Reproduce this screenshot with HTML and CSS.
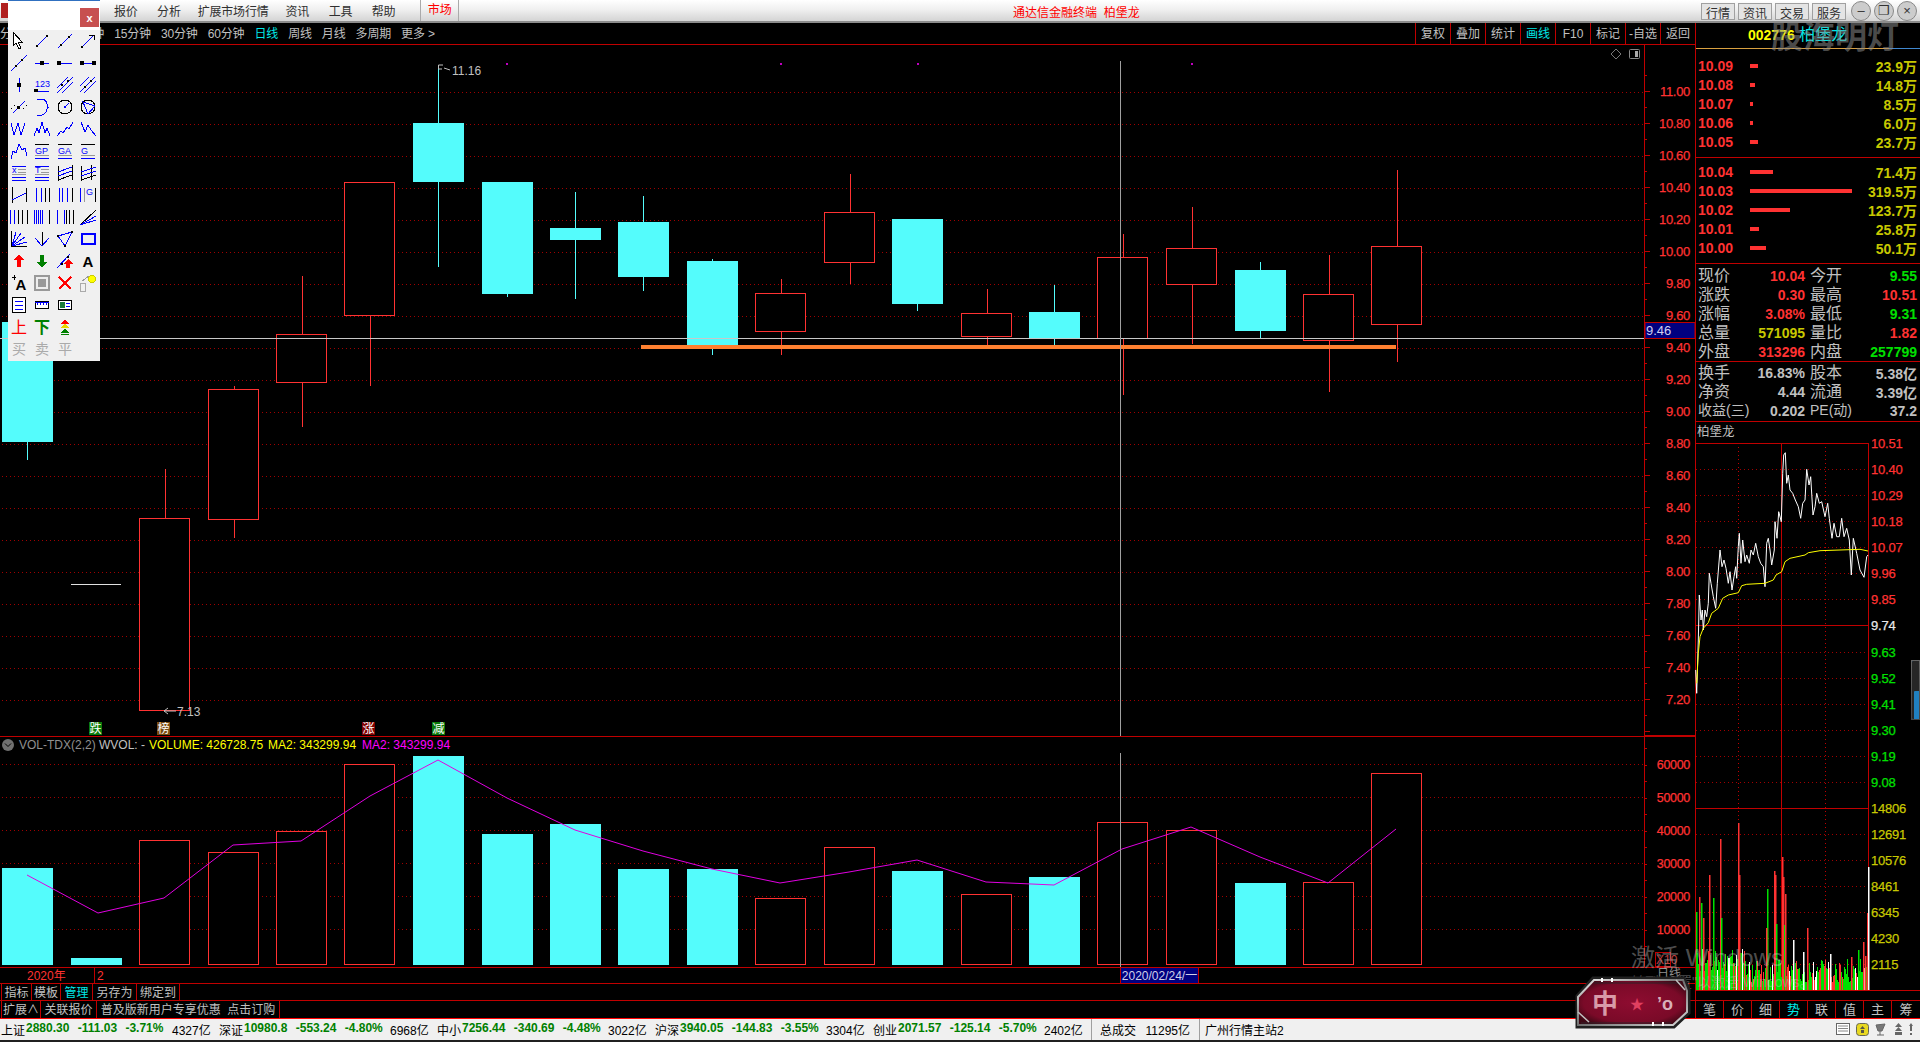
FILE: index.html
```html
<!DOCTYPE html>
<html lang="zh-CN">

<head>
    <meta charset="UTF-8">
    <title>通达信金融终端 柏堡龙</title>
    <link rel="stylesheet" href="styles.css">
</head>

<body>
    <header class="menubar">
        <div class="logo"></div>
        <nav class="menu">
            <span>报价</span><span>分析</span><span class="wide">扩展市场行情</span><span>资讯</span><span>工具</span><span>帮助</span>
        </nav>
        <div class="menu-market">市场</div>
        <div class="menu-title">通达信金融终端&nbsp;&nbsp;柏堡龙</div>
        <div class="menu-btns">
            <button>行情</button><button>资讯</button><button>交易</button><button>服务</button>
        </div>
        <div class="win-btns">
            <i>–</i><i>❐</i><i>×</i>
        </div>
    </header>

    <div class="main">
        <div class="left">
            <div class="periods">
                <div class="period-list">
                    <span>分时</span><span>1分钟</span><span>5分钟</span><span>15分钟</span><span>30分钟</span><span>60分钟</span>
                    <span class="on">日线</span><span>周线</span><span>月线</span><span>多周期</span><span>更多 &gt;</span>
                </div>
                <div class="period-tools">
                    <span>复权</span><span>叠加</span><span>统计</span><span class="on">画线</span><span>F10</span><span>标记</span><span>-自选</span><span>返回</span>
                </div>
            </div>

            <svg id="pricePane" class="pane-price" viewBox="0 45 1695 692"></svg>
            <svg id="volPane" class="pane-vol" viewBox="0 737 1695 230"></svg>

            <div class="tabrow date-row">
                <span class="year">2020年</span><span class="month">2</span>
                <span class="date-tip">2020/02/24/一</span>
                <span class="date-kind">日线</span>
            </div>
            <div class="tabrow tab-row">
                <span>指标</span><span>模板</span><span class="on">管理</span><span>另存为</span><span>绑定到</span>
            </div>
            <div class="tabrow ext-row">
                <span>扩展∧</span><span>关联报价</span><span>普及版新用户专享优惠&nbsp;&nbsp;点击订购</span>
            </div>
        </div>

        <aside class="side">
            <div class="side-head"><b>002776</b> <span>柏堡龙</span></div>

            <div id="askBook" class="book book-ask"></div>
            <div id="bidBook" class="book book-bid"></div>

            <div class="info info-quote">
                <div class="info-row"><div class="kv"><span>现价</span><b class="red">10.04</b></div><div class="kv"><span>今开</span><b class="green">9.55</b></div></div>
                <div class="info-row"><div class="kv"><span>涨跌</span><b class="red">0.30</b></div><div class="kv"><span>最高</span><b class="red">10.51</b></div></div>
                <div class="info-row"><div class="kv"><span>涨幅</span><b class="red">3.08%</b></div><div class="kv"><span>最低</span><b class="green">9.31</b></div></div>
                <div class="info-row"><div class="kv"><span>总量</span><b class="olive">571095</b></div><div class="kv"><span>量比</span><b class="red">1.82</b></div></div>
                <div class="info-row"><div class="kv"><span>外盘</span><b class="red">313296</b></div><div class="kv"><span>内盘</span><b class="green">257799</b></div></div>
            </div>
            <div class="info info-base">
                <div class="info-row"><div class="kv"><span>换手</span><b>16.83%</b></div><div class="kv"><span>股本</span><b>5.38亿</b></div></div>
                <div class="info-row"><div class="kv"><span>净资</span><b>4.44</b></div><div class="kv"><span>流通</span><b>3.39亿</b></div></div>
                <div class="info-row"><div class="kv"><span class="tight">收益(三)</span><b>0.202</b></div><div class="kv"><span class="tight">PE(动)</span><b>37.2</b></div></div>
            </div>

            <div class="mini-name">柏堡龙</div>
            <svg id="miniPane" class="pane-mini" viewBox="1696 443 224 547"></svg>
            <div class="mini-gap"></div>
            <div class="mini-tabs">
                <span>笔</span><span>价</span><span>细</span><span class="on">势</span><span>联</span><span>值</span><span>主</span><span>筹</span>
            </div>
        </aside>
    </div>

    <footer class="status">
        <div class="idx"><span class="idx-name">上证</span><b>2880.30 -111.03 -3.71%</b><span>4327亿</span></div>
        <div class="idx"><span class="idx-name">深证</span><b>10980.8 -553.24 -4.80%</b><span>6968亿</span></div>
        <div class="idx"><span class="idx-name">中小</span><b>7256.44 -340.69 -4.48%</b><span>3022亿</span></div>
        <div class="idx"><span class="idx-name">沪深</span><b>3940.05 -144.83 -3.55%</b><span>3304亿</span></div>
        <div class="idx"><span class="idx-name">创业</span><b>2071.57 -125.14 -5.70%</b><span>2402亿</span></div>
        <div class="stat-total"><span>总成交</span><span>11295亿</span></div>
        <div class="stat-server">广州行情主站2</div>
        <div class="tray">
            <svg width="14" height="14" viewBox="0 0 14 14"><rect x="0.5" y="1.5" width="13" height="11" fill="#fff" stroke="#666"/><path d="M2 4H12M2 6.500H12M2 9H12" stroke="#888"/></svg>
            <svg width="13" height="13" viewBox="0 0 13 13"><rect x="0.5" y="0.5" width="12" height="12" rx="3" fill="#e8d820" stroke="#665"/><path d="M6.500 3L9 6H4ZM5 7H8V10H5Z" fill="#554"/></svg>
            <svg width="13" height="13" viewBox="0 0 13 13"><path d="M1 2L10 1L7 8H3ZM5 8V12M2 12H9" fill="#777" stroke="#666"/></svg>
            <svg width="9" height="13" viewBox="0 0 9 13"><path d="M4.500 0L8 4H1ZM4.500 4L8 8H1ZM1 9H8V12H1Z" fill="#666"/></svg>
            <svg width="4" height="12" viewBox="0 0 4 12"><path d="M2 0L4 3H3V8H1V3H0ZM1 10H3V12H1Z" fill="#666"/></svg>
        </div>
    </footer>

    <!-- drawing toolbar floats over the chart -->
    <div class="toolbar">
        <div class="toolbar-title"><button>x</button></div>
        <div class="tool-grid">
            <svg viewBox="0 0 22 22"><path class="w" d="M5 2V16L8 13L11 19L13 18L10 12H14Z"/></svg>
            <svg viewBox="0 0 22 22"><path class="b" d="M6 16L16 6"/><rect class="d" x="5" y="15" width="2" height="2"/><rect class="d" x="15" y="5" width="2" height="2"/></svg>
            <svg viewBox="0 0 22 22"><path class="b" d="M4 18L18 4"/><rect class="d" x="6" y="14" width="2" height="2"/><rect class="d" x="14" y="6" width="2" height="2"/></svg>
            <svg viewBox="0 0 22 22"><path class="b" d="M5 17L17 5"/><path class="k" d="M12 5H17V10"/><rect class="d" x="4" y="16" width="2" height="2"/></svg>

            <svg viewBox="0 0 22 22"><path class="b" d="M3 19L19 3"/><rect class="d" x="7" y="13" width="2" height="2"/><rect class="d" x="13" y="7" width="2" height="2"/></svg>
            <svg viewBox="0 0 22 22"><path class="b" d="M4 11H18"/><rect class="d" x="9" y="9" width="4" height="4"/></svg>
            <svg viewBox="0 0 22 22"><path class="b" d="M4 11H18"/><rect class="d" x="3" y="9" width="4" height="4"/></svg>
            <svg viewBox="0 0 22 22"><path class="b" d="M4 11H18"/><rect class="d" x="3" y="9" width="4" height="4"/><rect class="d" x="15" y="9" width="4" height="4"/></svg>

            <svg viewBox="0 0 22 22"><path class="b" d="M11 4V18"/><rect class="d" x="9" y="9" width="4" height="4"/></svg>
            <svg viewBox="0 0 22 22"><text class="tb" x="4" y="13">123</text><path class="b" d="M4 17H18"/><rect class="d" x="3" y="15" width="4" height="3"/></svg>
            <svg viewBox="0 0 22 22"><path class="b" d="M3 14L14 3M3 19L19 3M8 19L19 8"/><rect class="d" x="7" y="10" width="2" height="2"/><rect class="d" x="13" y="6" width="2" height="2"/></svg>
            <svg viewBox="0 0 22 22"><path class="b" d="M3 12L12 3M3 18L18 3M7 19L19 7"/><rect class="d" x="7" y="12" width="2" height="2"/><rect class="d" x="13" y="6" width="2" height="2"/></svg>

            <svg viewBox="0 0 22 22"><path class="b" d="M5 17L17 5"/><path class="k" d="M3 13L7 9M15 13L19 9" stroke-dasharray="2 2"/><rect class="d" x="9" y="10" width="3" height="3"/></svg>
            <svg viewBox="0 0 22 22"><path class="b" d="M6 3H11C18 4 18 17 11 19H6M16 11H18"/></svg>
            <svg viewBox="0 0 22 22"><circle class="k" cx="11" cy="11" r="7"/><path class="b" d="M11 11L15 7"/><rect class="d2" x="10" y="10" width="2" height="2"/></svg>
            <svg viewBox="0 0 22 22"><circle class="k" cx="11" cy="11" r="7"/><path class="b" d="M6 6L18 10L11 18Z"/></svg>

            <svg viewBox="0 0 22 22"><path class="b" d="M3 5L6 17L10 5L13 17L17 5"/></svg>
            <svg viewBox="0 0 22 22"><path class="b" d="M3 18L6 10L8 15L11 4L14 15L16 10L19 18"/></svg>
            <svg viewBox="0 0 22 22"><path class="b" d="M3 18L7 13L9 15L13 9L15 11L19 4"/></svg>
            <svg viewBox="0 0 22 22"><path class="b" d="M4 4L8 14L11 7L14 12L19 18"/></svg>

            <svg viewBox="0 0 22 22"><path class="b" d="M3 19L5 11L8 13L11 4L14 10L17 8L19 16"/></svg>
            <svg viewBox="0 0 22 22"><path class="k" d="M4 4H18"/><text class="tb" x="4" y="14">GP</text><path class="g" d="M4 15H18"/><path class="b" d="M4 18H18"/></svg>
            <svg viewBox="0 0 22 22"><path class="k" d="M4 4H18"/><text class="tb" x="4" y="14">GA</text><path class="g" d="M4 15H18"/><path class="b" d="M4 18H18"/></svg>
            <svg viewBox="0 0 22 22"><path class="k" d="M4 4H18"/><text class="tb" x="4" y="14">G</text><path class="g" d="M4 15H18"/><path class="b" d="M4 18H18"/></svg>

            <svg viewBox="0 0 22 22"><path class="b" d="M4 4H18M4 18H18M4 15H18"/><path class="g" d="M10 7H18M10 10H18M4 12H18"/><text class="tb" x="4" y="11">x</text></svg>
            <svg viewBox="0 0 22 22"><path class="b" d="M4 4H18M4 18H18M4 15H18"/><path class="g" d="M10 7H18M10 10H18M4 12H18"/><text class="tb" x="4" y="11">T</text></svg>
            <svg viewBox="0 0 22 22"><path class="k" d="M4 4V19M18 3V18"/><path class="b" d="M4 10L18 5M4 14L18 9"/><path class="k" d="M4 18L18 13"/></svg>
            <svg viewBox="0 0 22 22"><path class="k" d="M4 4V19M14 3V18"/><path class="b" d="M4 10L19 5M4 14L19 9"/><path class="k" d="M4 18L19 13"/></svg>

            <svg viewBox="0 0 22 22"><path class="k" d="M4 3V19"/><path class="b" d="M4 16L18 9"/><path class="k" d="M18 4V18"/></svg>
            <svg viewBox="0 0 22 22"><path class="b" d="M5 4V18M10 4V18"/><path class="k" d="M14 4V18M18 4V18"/></svg>
            <svg viewBox="0 0 22 22"><path class="b" d="M5 4V18M8 4V18M13 4V18"/><path class="k" d="M18 4V18"/></svg>
            <svg viewBox="0 0 22 22"><path class="b" d="M3 4V18"/><path class="g" d="M7 4V18"/><path class="k" d="M18 4V18"/><text class="tb" x="9" y="11">G</text></svg>

            <svg viewBox="0 0 22 22"><path class="b" d="M2 4V18M6 4V18"/><path class="k" d="M10 4V18M14 4V18M19 4V18"/></svg>
            <svg viewBox="0 0 22 22"><path class="b" d="M3 4V18M5 4V18M7 4V18M9 4V18M11 4V18"/><path class="k" d="M18 4V18"/></svg>
            <svg viewBox="0 0 22 22"><path class="b" d="M3 4V18M10 4V18"/><path class="k" d="M12 4V18M15 4V18M19 4V18"/></svg>
            <svg viewBox="0 0 22 22"><path class="k" d="M3 19L19 4"/><path class="b" d="M3 19L19 10M3 19L19 14"/></svg>

            <svg viewBox="0 0 22 22"><path class="k" d="M3 3V18H19"/><path class="b" d="M4 18L8 4M4 18L13 5M4 18L17 9M4 18L19 14"/></svg>
            <svg viewBox="0 0 22 22"><path class="k" d="M11 4V18"/><path class="b" d="M4 10L11 18L18 10"/></svg>
            <svg viewBox="0 0 22 22"><path class="b" d="M4 8L18 4L11 18Z"/><rect class="d" x="3" y="7" width="2" height="2"/><rect class="d" x="17" y="3" width="2" height="2"/><rect class="d" x="10" y="17" width="2" height="2"/></svg>
            <svg viewBox="0 0 22 22"><rect class="b2" x="4.500" y="5.500" width="13" height="10"/></svg>

            <svg viewBox="0 0 22 22"><path fill="#f00" d="M11 4L16 10H13V17H9V10H6Z"/></svg>
            <svg viewBox="0 0 22 22"><path fill="#008000" d="M9 5H13V12H16L11 18L6 12H9Z"/></svg>
            <svg viewBox="0 0 22 22"><path class="b" d="M3 18L16 4"/><rect class="d" x="7" y="13" width="2" height="2"/><rect class="d" x="13" y="6" width="2" height="2"/><path fill="#f00" d="M14 9L19 14H16V18H12V14H9Z"/></svg>
            <svg viewBox="0 0 22 22"><text class="tk" x="11" y="17">A</text></svg>

            <svg viewBox="0 0 22 22"><text class="tk" x="13" y="18">A</text><path class="k" d="M6 3V8M4 5H8"/></svg>
            <svg viewBox="0 0 22 22"><rect x="4" y="4" width="14" height="14" fill="#eee" stroke="#999" stroke-width="2"/><rect x="7" y="7" width="8" height="8" fill="#999"/></svg>
            <svg viewBox="0 0 22 22"><path stroke="#f00" stroke-width="2" d="M5 5L17 17M17 5L5 17"/></svg>
            <svg viewBox="0 0 22 22"><rect x="3.500" y="11.500" width="5" height="8" fill="none" stroke="#aaa"/><path class="g" d="M5 9L12 4"/><circle cx="15" cy="7" r="3.500" fill="#ff0" stroke="#cc0"/></svg>

            <svg viewBox="0 0 22 22"><rect x="4.500" y="3.500" width="13" height="15" fill="#fff" stroke="#000"/><path class="b" d="M7 7H15M7 11H15M7 15H15"/></svg>
            <svg viewBox="0 0 22 22"><rect x="4.500" y="7.500" width="13" height="7" fill="#fff" stroke="#000"/><path class="b" d="M4 8H18M6 8V11M9 8V11M12 8V11M15 8V11"/></svg>
            <svg viewBox="0 0 22 22"><rect x="4.500" y="6.500" width="13" height="9" fill="#fff" stroke="#000"/><rect x="6" y="8" width="5" height="6" fill="#1a7a3a"/><path class="b" d="M12 9H16M12 12H16"/></svg>
            <svg viewBox="0 0 22 22"></svg>

            <svg viewBox="0 0 22 22"><text class="tc red-t" x="11" y="17">上</text></svg>
            <svg viewBox="0 0 22 22"><text class="tc green-t" x="11" y="17">下</text></svg>
            <svg viewBox="0 0 22 22"><path fill="#f00" d="M11 3L15 8H7Z"/><path fill="#e8d800" d="M11 7L15 12H7Z"/><path fill="#008000" d="M11 12L15 17H7Z"/><path d="M7 18H15" stroke="#008000"/></svg>
            <svg viewBox="0 0 22 22"></svg>

            <svg viewBox="0 0 22 22"><text class="tc gray-t" x="11" y="16">买</text></svg>
            <svg viewBox="0 0 22 22"><text class="tc gray-t" x="11" y="16">卖</text></svg>
            <svg viewBox="0 0 22 22"><text class="tc gray-t" x="11" y="16">平</text></svg>
        </div>
    </div>

    <div class="wm-brand">股海明灯</div>
    <div class="wm-activate">
        <div class="wm-big">激活 Windows</div>
        <div class="wm-small">转到"设置"以激活 Windows。</div>
    </div>

    <svg class="badge" viewBox="0 0 130 66">
        <defs>
            <radialGradient id="badgeFill" cx="0.5" cy="0.5" r="0.6">
                <stop offset="0" stop-color="#8e0c30"/>
                <stop offset="0.75" stop-color="#7a0a28"/>
                <stop offset="1" stop-color="#3c0814"/>
            </radialGradient>
            <linearGradient id="badgeEdge" x1="0" y1="0" x2="1" y2="1">
                <stop offset="0" stop-color="#e8e8e8"/>
                <stop offset="0.5" stop-color="#707070"/>
                <stop offset="1" stop-color="#d8d8d8"/>
            </linearGradient>
        </defs>
        <path d="M7 26L23 8H114L119 20V43L104 57H7Z" fill="#1c1014" stroke="#202020" stroke-width="3"/>
        <path d="M8 27L24 10H113L117 21V42L103 55H8Z" fill="url(#badgeFill)" stroke="url(#badgeEdge)" stroke-width="2"/>
        <path d="M24 13H111M11 53H101" stroke="#302028"/>
        <path d="M32 8V12M42 8V12M83 52V56M93 52V56" stroke="#fff" stroke-width="2"/>
        <path d="M8 42L19 52M106 10L115 20" stroke="#c0c0c0" stroke-width="1.500"/>
        <text class="badge-cn" x="22" y="43">中</text>
        <text class="badge-star" x="60" y="39">★</text>
        <text class="badge-pct" x="87" y="40">’o</text>
    </svg>

    <div class="side-grip"></div>

    <script src="chart.js"></script>
</body>

</html>
```

FILE: styles.css
```css
* {
    margin: 0;
    padding: 0;
    box-sizing: border-box;
}

body {
    width: 1920px;
    height: 1042px;
    overflow: hidden;
    position: relative;
    background-color: #000;
    color: #c0c0c0;
    font-family: "Liberation Sans", "Noto Sans CJK SC", sans-serif;
    font-size: 12px;
    display: flex;
    flex-direction: column;
}

/* top menu */
.menubar {
    height: 23px;
    flex: none;
    display: flex;
    align-items: center;
    background: linear-gradient(#ffffff, #f0f0f0 45%, #d4d4d4);
    border-bottom: 2px solid #8c8c8c;
    color: #303030;
    position: relative;
}

.logo {
    position: absolute;
    left: 1px;
    top: 3px;
    width: 8px;
    height: 15px;
    background-color: #b02020;
}

.menu {
    display: flex;
    gap: 19.500px;
    margin-left: 114px;
    letter-spacing: -0.2px;
}

.menu .wide {
    margin: 0 -2.500px;
}

.menu-market {
    margin-left: 25px;
    width: 39px;
    height: 21px;
    line-height: 21px;
    text-align: center;
    color: #f00;
    border-left: 1px solid #aaa;
    border-right: 1px solid #aaa;
}

.menu-title {
    position: absolute;
    left: 1013px;
    top: 3px;
    color: #f00;
}

.menu-btns {
    position: absolute;
    left: 1701px;
    top: 3px;
    display: flex;
    gap: 3px;
}

.menu-btns button {
    width: 34px;
    height: 17px;
    font: inherit;
    color: #303030;
    background-color: #e4e4e4;
    border: 1px solid #a0a0a0;
}

.win-btns {
    position: absolute;
    left: 1851px;
    top: 1px;
    display: flex;
    gap: 3px;
}

.win-btns i {
    width: 20px;
    height: 20px;
    border-radius: 50%;
    border: 1px solid #888;
    background-color: #ccc;
    color: #333;
    font-style: normal;
    font-size: 13px;
    line-height: 17px;
    text-align: center;
}

/* main area */
.main {
    height: 995px;
    flex: none;
    display: flex;
}

.left {
    width: 1695px;
    flex: none;
    display: flex;
    flex-direction: column;
}

.periods {
    height: 22px;
    flex: none;
    display: flex;
    justify-content: space-between;
    border-bottom: 1px solid #c00000;
}

.period-list {
    display: flex;
    gap: 10px;
    line-height: 22px;
    letter-spacing: -0.15px;
}

.period-tools {
    display: flex;
}

.period-tools span {
    width: 35px;
    text-align: center;
    line-height: 22px;
    border-left: 1px solid #c00000;
}

.on {
    color: #00e8e8;
}

.pane-price,
.pane-vol,
.pane-mini {
    display: block;
    flex: none;
}

.pane-price {
    width: 1695px;
    height: 692px;
}

.pane-vol {
    width: 1695px;
    height: 230px;
}

.tabrow {
    flex: none;
    display: flex;
    border-top: 1px solid #c00000;
}

.date-row {
    height: 16px;
    position: relative;
    line-height: 17px;
}

.year {
    color: #ff3232;
    width: 95px;
    padding-left: 27px;
    border-right: 1px solid #c00000;
}

.month {
    color: #ff3232;
    padding-left: 2px;
}

.date-tip {
    position: absolute;
    left: 1120px;
    top: 0;
    width: 79px;
    height: 15px;
    background-color: #000080;
    color: #d0d0e8;
    text-align: center;
    border-left: 1px solid #c00000;
    border-right: 1px solid #c00000;
}

.date-kind {
    position: absolute;
    left: 1657px;
    top: -2px;
    color: #909090;
}

.tab-row {
    height: 17px;
}

.tab-row span,
.ext-row span {
    text-align: center;
    line-height: 18px;
    height: 100%;
    border-right: 1px solid #c00000;
}

.tab-row span:first-child,
.ext-row span:first-child {
    margin-left: 1px;
    border-left: 1px solid #c00000;
}

.tab-row span:nth-child(1) { width: 31px; }
.tab-row span:nth-child(2) { width: 29px; }
.tab-row span:nth-child(3) { width: 32px; }
.tab-row span:nth-child(4) { width: 44px; }
.tab-row span:nth-child(5) { width: 43px; }

.ext-row {
    height: 18px;
}

.ext-row span:nth-child(1) { width: 40px; }
.ext-row span:nth-child(2) { width: 56px; }
.ext-row span:nth-child(3) { width: 183px; }

/* right side */
.side {
    width: 225px;
    flex: none;
    border-left: 1px solid #c00000;
    display: flex;
    flex-direction: column;
    position: relative;
}

.side-head {
    height: 26px;
    flex: none;
    line-height: 24px;
    padding-left: 52px;
    font-size: 16px;
    color: #00e8e8;
    border-bottom: 1px solid;
    border-image: linear-gradient(90deg, #d8a040 86%, #4088d0 86%) 1;
}

.side-head b {
    color: #ffff00;
    font-size: 14px;
}

.book {
    flex: none;
}

.book-ask {
    padding: 7px 0 6px;
    border-bottom: 1px solid #c00000;
}

.book-bid {
    padding: 4px 0 6px;
    border-bottom: 1px solid #c00000;
}

.book-row {
    height: 19px;
    display: flex;
    align-items: center;
    font-weight: bold;
    font-size: 14px;
    padding-left: 2px;
    padding-right: 3px;
}

.book-price {
    width: 52px;
    color: #ff3232;
}

.book-bar {
    height: 4px;
    background-color: #ff3232;
}

.book-vol {
    margin-left: auto;
    color: #c8c800;
}

.info {
    flex: none;
    padding-left: 2px;
    padding-right: 2px;
    border-bottom: 1px solid #c00000;
}

.info-quote {
    padding-top: 2px;
}

.info-base {
    padding-top: 1px;
    padding-bottom: 1px;
}

.info-row {
    height: 19px;
    display: flex;
    gap: 5px;
}

.kv {
    width: 107px;
    display: flex;
    justify-content: space-between;
    align-items: center;
    white-space: nowrap;
}

.kv span {
    font-size: 16px;
    line-height: 19px;
}

.kv .tight {
    font-size: 14px;
}

.kv b {
    font-size: 14px;
}

.red {
    color: #ff3232;
}

.green {
    color: #00e000;
}

.olive {
    color: #c8c800;
}

.mini-name {
    height: 21px;
    flex: none;
    padding-left: 1px;
    line-height: 20px;
    font-size: 12.500px;
}

.pane-mini {
    width: 224px;
    height: 547px;
    overflow: visible;
}

.mini-gap {
    height: 10px;
    flex: none;
    border-top: 1px solid #c00000;
}

.mini-tabs {
    height: 18px;
    flex: none;
    display: flex;
    border-top: 1px solid #c00000;
}

.mini-tabs span {
    width: 28px;
    text-align: center;
    font-size: 13px;
    line-height: 17px;
    border-right: 1px solid #c00000;
}

.mini-tabs span:last-child {
    border-right: none;
}

/* status bar */
.status {
    height: 24px;
    flex: none;
    display: flex;
    align-items: center;
    border-top: 1px solid #ff0000;
    border-bottom: 2px solid #202020;
    background-color: #f0f0f0;
    color: #000;
    position: relative;
    padding-left: 1px;
}

.idx {
    width: 218px;
    display: flex;
    white-space: nowrap;
}

.idx-name {
    width: 25px;
}

.idx b {
    width: 146px;
    color: #008000;
    word-spacing: 5px;
}

.stat-total {
    margin-left: 0;
    width: 109px;
    height: 100%;
    display: flex;
    align-items: center;
    justify-content: space-between;
    padding: 0 9px 0 8px;
    border-left: 1px solid #a0a0a0;
    border-right: 1px solid #a0a0a0;
}

.stat-server {
    margin-left: 5px;
}

.tray {
    position: absolute;
    left: 1836px;
    top: 3px;
    display: flex;
    align-items: center;
    gap: 6px;
}

/* drawing toolbar */
.toolbar {
    position: absolute;
    left: 8px;
    top: 0;
    width: 92px;
    height: 361px;
    background-color: #f0f0f0;
    border-top: 1px solid #3070c0;
    z-index: 5;
}

.toolbar-title {
    height: 29px;
    background-color: #fff;
    position: relative;
}

.toolbar-title button {
    position: absolute;
    left: 72px;
    top: 7px;
    width: 19px;
    height: 19px;
    border: none;
    background-color: #c75050;
    color: #fff;
    font: bold 11px "Liberation Sans", sans-serif;
}

.tool-grid {
    display: grid;
    grid-template-columns: repeat(4, 23px);
    grid-auto-rows: 22px;
}

.tool-grid svg {
    width: 22px;
    height: 22px;
    shape-rendering: crispEdges;
}

.tool-grid .b {
    stroke: #0000ff;
    fill: none;
}

.tool-grid .b2 {
    stroke: #0000ff;
    stroke-width: 2;
    fill: none;
}

.tool-grid .k {
    stroke: #000;
    fill: none;
}

.tool-grid .g {
    stroke: #999;
    fill: none;
}

.tool-grid .w {
    stroke: #000;
    fill: #fff;
}

.tool-grid .d {
    fill: #000;
}

.tool-grid .d2 {
    fill: #0000ff;
}

.tool-grid text {
    font-family: "Liberation Sans", "Noto Sans CJK SC", sans-serif;
}

.tb {
    font-size: 9px;
    fill: #0000ff;
}

.tk {
    font-size: 15px;
    font-weight: bold;
    text-anchor: middle;
    fill: #000;
}

.tc {
    font-size: 16px;
    text-anchor: middle;
}

.red-t {
    fill: #f00;
}

.green-t {
    fill: #008000;
    font-weight: bold;
}

.gray-t {
    fill: #aaa;
    font-size: 14px;
}

/* chart texts */
.axis-red {
    fill: #ff3232;
    stroke: #ff3232;
    stroke-width: 0.25px;
    font-size: 13px;
    letter-spacing: -0.5px;
    text-anchor: end;
}

.axis-left {
    font-size: 13px;
    letter-spacing: -0.3px;
}

.vol-axis {
    font-size: 12.500px;
    letter-spacing: -0.3px;
}

.mini-label {
    font-size: 13px;
    letter-spacing: -0.2px;
    stroke-width: 0.25px;
}

.note {
    fill: #c0c0c0;
    font-size: 12px;
}

.tag-text {
    fill: #d0d0f0;
    font-size: 13px;
}

.mark {
    fill: #fff;
    font-size: 12px;
    text-anchor: middle;
}

/* overlays */
.wm-brand {
    position: absolute;
    left: 1771px;
    top: 17px;
    font-size: 32px;
    font-weight: bold;
    line-height: 40px;
    color: rgba(140, 140, 140, 0.55);
    white-space: nowrap;
    z-index: 4;
}

.wm-activate {
    position: absolute;
    left: 1631px;
    top: 943px;
    color: rgba(200, 200, 200, 0.4);
    white-space: nowrap;
    z-index: 3;
}

.wm-big {
    font-size: 24px;
    line-height: 30px;
}

.wm-small {
    font-size: 14px;
    line-height: 18px;
    margin-left: 0;
}

.badge {
    position: absolute;
    left: 1570px;
    top: 970px;
    width: 130px;
    height: 66px;
    z-index: 6;
}

.badge-cn {
    fill: #d89aa8;
    font-size: 26px;
    font-weight: bold;
}

.badge-star {
    fill: #e04060;
    font-size: 14px;
}

.badge-pct {
    fill: #d8b0b8;
    font-size: 18px;
    font-weight: bold;
}

.side-grip {
    position: absolute;
    left: 1911px;
    top: 660px;
    width: 9px;
    height: 60px;
    background: linear-gradient(#3a3a3a, #303840);
    border: 1px solid #556;
    border-radius: 2px 0 0 2px;
    border-image: linear-gradient(#666, #444) 1;
    box-shadow: inset 2px 30px 0 #262626, inset 2px 58px 0 #2080c0;
    z-index: 4;
}
```

FILE: chart.js
```js
const NS = 'http://www.w3.org/2000/svg';
const RED = '#ff3232';
const DARK = '#c00000';
const CYAN = '#54fcfc';

function add(svg, tag, attrs, text) {
    const el = document.createElementNS(NS, tag);
    for (const key in attrs) {
        el.setAttribute(key, attrs[key]);
    }
    if (text !== undefined) {
        el.textContent = text;
    }
    svg.appendChild(el);
    return el;
}

function hline(svg, x1, x2, y, color) {
    add(svg, 'line', { x1, x2, y1: y + 0.5, y2: y + 0.5, stroke: color });
}

function vline(svg, x, y1, y2, color) {
    add(svg, 'line', { x1: x + 0.5, x2: x + 0.5, y1, y2, stroke: color });
}

function dotted(svg, x1, x2, y) {
    add(svg, 'line', { x1, x2, y1: y + 0.5, y2: y + 0.5, stroke: '#a00000', 'stroke-dasharray': '1 3' });
}

// x, body top, body bottom, wick top, wick bottom, up?
const candles = [
    [27, 322, 442, 322, 460, 0],
    [165, 518, 710, 469, 710, 1],
    [234, 389, 519, 386, 538, 1],
    [302, 334, 382, 276, 427, 1],
    [370, 182, 315, 182, 386, 1],
    [438, 123, 182, 65, 267, 0],
    [507, 182, 294, 182, 297, 0],
    [575, 228, 240, 192, 299, 0],
    [643, 222, 277, 196, 291, 0],
    [712, 261, 347, 259, 355, 0],
    [781, 293, 331, 279, 355, 1],
    [850, 212, 262, 174, 284, 1],
    [917, 219, 304, 219, 311, 0],
    [987, 313, 336, 289, 348, 1],
    [1054, 312, 338, 285, 345, 0],
    [1123, 257, 338, 234, 395, 1],
    [1192, 248, 284, 207, 344, 1],
    [1260, 270, 331, 262, 338, 0],
    [1329, 294, 340, 255, 392, 1],
    [1397, 246, 324, 170, 362, 1]
];

// x, top of the bar, up?
const volumes = [
    [27, 868, 0], [96, 958, 0], [165, 840, 1], [234, 852, 1], [302, 831, 1], [370, 764, 1], [438, 756, 0],
    [507, 834, 0], [575, 824, 0], [643, 869, 0], [712, 869, 0], [781, 898, 1], [850, 847, 1], [917, 871, 0],
    [987, 894, 1], [1054, 877, 0], [1123, 822, 1], [1192, 830, 1], [1260, 883, 0], [1329, 882, 1], [1397, 773, 1]
];

const maLine = '27,875 98,913 164,898 233,845 301,841 370,796 438,760 507,798 575,830 643,851 712,869 780,883 849,872 917,860 986,882 1054,885 1122,849 1191,827 1260,857 1328,883 1396,829';

function drawCandle(svg, c) {
    const color = c[5] ? RED : CYAN;
    vline(svg, c[0], c[3], c[4], color);
    if (c[5]) {
        add(svg, 'rect', { x: c[0] - 25.5, y: c[1] + 0.5, width: 50, height: c[2] - c[1], fill: '#000', stroke: color });
    } else {
        add(svg, 'rect', { x: c[0] - 25, y: c[1], width: 51, height: c[2] - c[1], fill: color });
    }
}

function drawPrice() {
    const svg = document.getElementById('pricePane');
    for (let i = 0; i <= 19; i++) {
        const y = 91.5 + i * 32;
        dotted(svg, 2, 1644, Math.round(y));
        add(svg, 'text', { class: 'axis-red axis-left', x: 1690, y: y + 4 }, (11 - i * 0.2).toFixed(2));
    }
    for (let y = 75; y < 736; y += 16) {
        const major = (y - 91) % 32 === 0;
        hline(svg, 1645, major ? 1650 : 1647, y, DARK);
    }
    candles.forEach(c => drawCandle(svg, c));
    // doji far left
    hline(svg, 71, 121, 584, '#e0e0e0');

    [506, 780, 917, 1191].forEach(x => add(svg, 'rect', { x, y: 63, width: 2, height: 2, fill: '#c000c0' }));

    // cross hair and the hand drawn line
    hline(svg, 0, 1644, 338, '#c8c8c8');
    add(svg, 'rect', { x: 641, y: 345, width: 755, height: 4, fill: '#ff8030' });
    vline(svg, 1120, 61, 737, '#a0a0a0');

    // extreme price notes
    add(svg, 'path', { d: 'M438.500 65H443M438.500 65V69H442M444 68L450 70', stroke: '#c0c0c0', fill: 'none' });
    add(svg, 'text', { class: 'note', x: 452, y: 75 }, '11.16');
    add(svg, 'path', { d: 'M164 711H176M164 711L168 708M164 711L168 714', stroke: '#c0c0c0', fill: 'none' });
    add(svg, 'text', { class: 'note', x: 177, y: 716 }, '7.13');

    // little flags above the volume pane
    [[89, '跌', '#0a7a0a'], [157, '榜', '#7a4a10'], [362, '涨', '#800000'], [432, '减', '#0a7a0a']].forEach(m => {
        add(svg, 'rect', { x: m[0], y: 722, width: 13, height: 13, fill: m[2] });
        add(svg, 'text', { class: 'mark', x: m[0] + 6.5, y: 733 }, m[1]);
    });

    // top right icons
    add(svg, 'path', { d: 'M1616 49L1621 54L1616 59L1611 54Z', stroke: '#777', fill: 'none' });
    add(svg, 'rect', { x: 1629.5, y: 49.5, width: 10, height: 9, rx: 1, stroke: '#888', fill: '#000' });
    add(svg, 'rect', { x: 1635, y: 51, width: 3, height: 6, fill: '#aaa' });

    // current price tag
    add(svg, 'rect', { x: 1645, y: 322.5, width: 50, height: 16, fill: '#000080', stroke: DARK });
    add(svg, 'text', { class: 'tag-text', x: 1646, y: 335 }, '9.46');

    vline(svg, 1644, 45, 737, DARK);
    hline(svg, 0, 1695, 736, DARK);
    add(svg, 'rect', { x: 1645, y: 735, width: 50, height: 2, fill: DARK });
}

function drawVol() {
    const svg = document.getElementById('volPane');
    for (let i = 0; i < 6; i++) {
        const y = 764 + i * 33;
        dotted(svg, 2, 1644, y);
        add(svg, 'text', { class: 'axis-red vol-axis', x: 1690, y: y + 5 }, String(60000 - i * 10000));
    }
    for (let y = 764 - 16; y < 960; y += 16.5) {
        const major = Math.round(y - 764) % 33 === 0;
        hline(svg, 1645, major ? 1650 : 1647, Math.round(y), DARK);
    }
    volumes.forEach(v => {
        if (v[2]) {
            add(svg, 'rect', { x: v[0] - 25.5, y: v[1] + 0.5, width: 50, height: 964 - v[1], fill: '#000', stroke: RED });
        } else {
            add(svg, 'rect', { x: v[0] - 25, y: v[1], width: 51, height: 965 - v[1], fill: CYAN });
        }
    });
    add(svg, 'polyline', { points: maLine, fill: 'none', stroke: '#e000e0' });
    vline(svg, 1120, 753, 967, '#a0a0a0');

    // header of the pane
    add(svg, 'circle', { cx: 8, cy: 745, r: 6, fill: '#707070' });
    add(svg, 'path', { d: 'M5 743.500L8 746.500L11 743.500', stroke: '#000', fill: 'none' });
    [[19, 'VOL-TDX(2,2)', '#909090'], [99, 'WVOL: -', '#c0c0c0'], [149, 'VOLUME: 426728.75', '#ffff00'],
     [268, 'MA2: 343299.94', '#ffff00'], [362, 'MA2: 343299.94', '#ff00ff']].forEach(t => {
        add(svg, 'text', { x: t[0], y: 749, fill: t[2], 'font-size': 12 }, t[1]);
    });

    // ratio box near the bottom of the axis
    add(svg, 'rect', { x: 1655.5, y: 952.5, width: 15, height: 14, fill: 'none', stroke: DARK });
    add(svg, 'text', { x: 1656, y: 964, fill: '#c04040', 'font-size': 12 }, 'X10');

    vline(svg, 1644, 737, 967, DARK);
}

// points read off the chart, relative to (1640, 440) at 3x
const pricePts = '167,690 170,760 175,600 178,465 183,540 187,510 190,570 195,510 200,530 205,490 208,400 213,430 220,470 227,505 232,430 240,330 246,380 252,360 258,385 265,430 270,395 276,450 282,410 287,380 290,415 295,320 298,280 303,370 308,300 315,365 320,345 328,370 333,330 340,345 347,310 355,350 362,370 370,380 375,440 380,310 385,295 390,330 395,375 403,330 405,245 411,295 416,215 424,245 428,100 431,45 436,38 440,130 445,105 450,150 458,160 466,180 475,200 482,235 488,190 495,180 500,88 507,135 512,110 519,225 525,200 530,160 538,190 545,185 555,230 563,190 568,235 576,295 582,250 590,290 598,290 605,235 612,290 620,265 628,300 634,405 640,295 650,340 660,390 672,412 680,350 684,345';
const avgPts = '170,730 175,640 180,590 190,565 205,548 215,520 235,505 248,475 265,465 295,458 305,437 320,433 375,430 400,420 408,405 425,395 435,365 450,355 495,345 505,338 540,332 600,330 660,328 684,333';

function scalePts(str) {
    return str.split(' ').map(p => {
        const xy = p.split(',');
        return (1640 + xy[0] / 3).toFixed(1) + ',' + (440 + xy[1] / 3).toFixed(1);
    }).join(' ');
}

// x, top, colour
const volPeaks = [
    [1699, 897, RED], [1696, 912, '#00e000'], [1701, 903, '#00e000'], [1703, 918, RED], [1709, 875, RED], [1713, 898, '#00e000'],
    [1720, 839, RED], [1721, 918, '#00e000'], [1738, 823, RED], [1739, 875, RED], [1767, 889, '#00e000'], [1766, 928, RED],
    [1774, 871, RED], [1775, 875, RED], [1776, 924, '#00e000'], [1782, 857, RED], [1783, 877, RED], [1784, 925, '#00e000'], [1785, 894, RED],
    [1793, 940, '#fff'], [1803, 952, '#fff'], [1807, 928, RED], [1830, 954, '#fff'], [1851, 957, RED], [1858, 950, '#00e000'],
    [1863, 942, RED], [1865, 956, RED], [1867, 913, RED], [1868, 867, '#fff']
];

function drawMini() {
    const svg = document.getElementById('miniPane');
    const labels = ['10.51', '10.40', '10.29', '10.18', '10.07', '9.96', '9.85', '9.74', '9.63', '9.52', '9.41', '9.30', '9.19', '9.08',
        '14806', '12691', '10576', '8461', '6345', '4230', '2115'];
    labels.forEach((label, i) => {
        const y = Math.round(443 + i * 26.07);
        let color = RED;
        if (i === 7) color = '#e8e8e8';
        if (i > 7) color = '#00e000';
        if (i > 13) color = '#c8c800';
        if (i === 0 || i === 7 || i === 14) hline(svg, 1696, 1868, y, DARK);
        else dotted(svg, 1696, 1868, y);
        add(svg, 'text', { class: 'mini-label', x: 1871, y: y + 5, fill: color, stroke: color }, label);
    });
    vline(svg, 1738, 443, 990, DARK);
    svg.lastChild.setAttribute('stroke-dasharray', '1 3');
    vline(svg, 1825, 443, 990, DARK);
    svg.lastChild.setAttribute('stroke-dasharray', '1 3');
    vline(svg, 1781, 443, 990, DARK);
    vline(svg, 1868, 443, 990, DARK);

    // tick volume, small noise plus the peaks read off the chart
    let seed = 7;
    for (let x = 1696; x < 1868; x++) {
        seed = (seed * 137 + 59) % 1009;
        const h = 8 + seed % 24 + (x < 1745 ? 10 : 0);
        const pick = seed % 9;
        const color = pick < 5 ? '#00e000' : (pick < 8 ? RED : '#fff');
        add(svg, 'rect', { x, y: 990 - h, width: 1, height: h, fill: color });
    }
    volPeaks.forEach(p => add(svg, 'rect', { x: p[0], y: p[1], width: 1.5, height: 990 - p[1], fill: p[2] }));

    add(svg, 'polyline', { points: scalePts(pricePts), fill: 'none', stroke: '#fff' });
    add(svg, 'polyline', { points: scalePts(avgPts), fill: 'none', stroke: '#ffff00' });
}

const asks = [['10.09', 8, '23.9万'], ['10.08', 5, '14.8万'], ['10.07', 3, '8.5万'], ['10.06', 3, '6.0万'], ['10.05', 8, '23.7万']];
const bids = [['10.04', 23, '71.4万'], ['10.03', 102, '319.5万'], ['10.02', 40, '123.7万'], ['10.01', 9, '25.8万'], ['10.00', 16, '50.1万']];

function fillBook(id, rows) {
    const box = document.getElementById(id);
    rows.forEach(r => {
        const row = document.createElement('div');
        row.className = 'book-row';
        row.innerHTML = `<span class="book-price">${r[0]}</span><span class="book-bar" style="width:${r[1]}px"></span><span class="book-vol">${r[2]}</span>`;
        box.appendChild(row);
    });
}

fillBook('askBook', asks);
fillBook('bidBook', bids);
drawPrice();
drawVol();
drawMini();
```
